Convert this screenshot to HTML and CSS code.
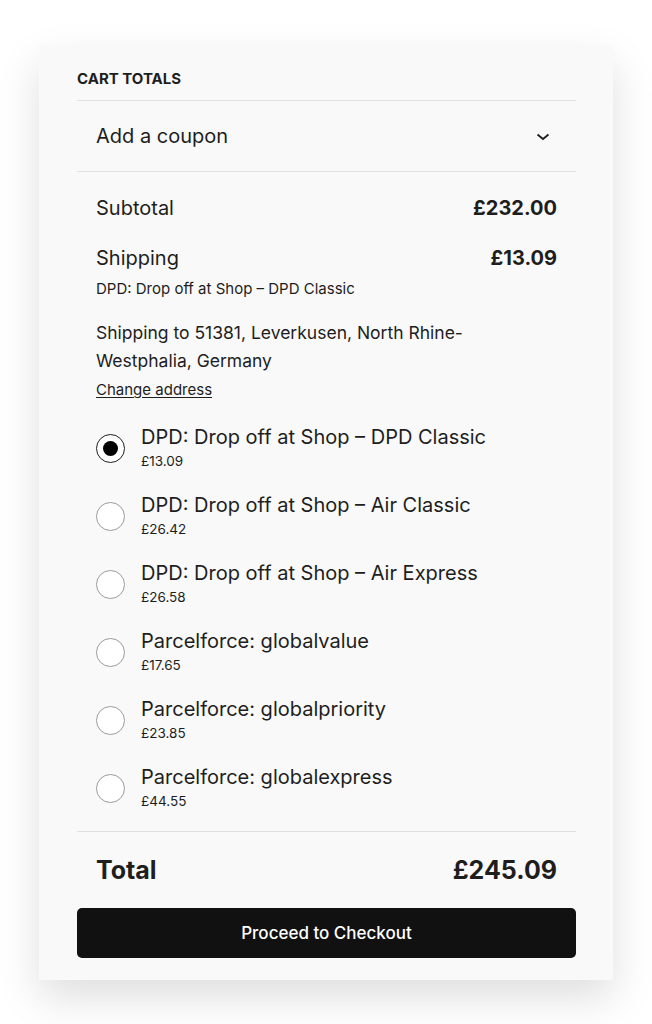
FILE: index.html
```html
<!DOCTYPE html>
<html lang="en">
<head>
<meta charset="utf-8">
<title>Cart totals</title>
<link rel="stylesheet" href="styles.css">
</head>
<body>
<div class="card">
  <h2 class="title">Cart totals</h2>
  <div class="coupon">
    <span>Add a coupon</span>
    <svg class="chev" width="14" height="8" viewBox="0 0 14 8"><path d="M1.5 1.5 L7 6 L12.5 1.5" fill="none" stroke="#1e1e1e" stroke-width="1.8"/></svg>
  </div>
  <div class="totals">
    <div class="row subtotal"><span>Subtotal</span><span class="amt">£232.00</span></div>
    <div class="row shipping"><span>Shipping</span><span class="amt">£13.09</span></div>
    <div class="method">DPD: Drop off at Shop – DPD Classic</div>
    <p class="dest">Shipping to 51381, Leverkusen, North Rhine-Westphalia, Germany<br><a href="#" class="change">Change address</a></p>
    <ul class="options">
      <li class="opt"><span class="radio checked"></span><div><div class="lbl">DPD: Drop off at Shop – DPD Classic</div><div class="price">£13.09</div></div></li>
      <li class="opt"><span class="radio"></span><div><div class="lbl">DPD: Drop off at Shop – Air Classic</div><div class="price">£26.42</div></div></li>
      <li class="opt"><span class="radio"></span><div><div class="lbl">DPD: Drop off at Shop – Air Express</div><div class="price">£26.58</div></div></li>
      <li class="opt"><span class="radio"></span><div><div class="lbl">Parcelforce: globalvalue</div><div class="price">£17.65</div></div></li>
      <li class="opt"><span class="radio"></span><div><div class="lbl">Parcelforce: globalpriority</div><div class="price">£23.85</div></div></li>
      <li class="opt"><span class="radio"></span><div><div class="lbl">Parcelforce: globalexpress</div><div class="price">£44.55</div></div></li>
    </ul>
  </div>
  <div class="row total"><span>Total</span><span>£245.09</span></div>
  <button class="checkout">Proceed to Checkout</button>
</div>
</body>
</html>
```
FILE: styles.css
```css
* { box-sizing: border-box; }
html, body { margin: 0; padding: 0; background: #fff; }
body {
  font-family: Inter, "Noto Sans", sans-serif;
  color: #1e1e1e;
  padding-top: 45px;
  padding-bottom: 45px;
}
.card {
  width: 574px;
  margin: 0 auto;
  background: #f9f9f9;
  padding: 24px 37px 22px 38px;
  box-shadow: 0 18px 40px rgba(0,0,0,0.13);
}
.title {
  margin: 0;
  font-size: 15px;
  line-height: 20px;
  font-weight: 700;
  text-transform: uppercase;
  letter-spacing: 0;
  padding-bottom: 11px;
  border-bottom: 1px solid #e0e0e0;
}
.coupon {
  height: 71px;
  display: flex;
  align-items: center;
  justify-content: space-between;
  padding: 0 26px 0 19px;
  font-size: 20px;
  border-bottom: 1px solid #e0e0e0;
}
.chev { display: block; margin-top: 2px; }
.totals {
  padding: 0 19px 18px 19px;
  border-bottom: 1px solid #e0e0e0;
}
.row {
  display: flex;
  justify-content: space-between;
  font-size: 20px;
  line-height: 24px;
}
.amt { font-weight: 700; }
.subtotal { padding-top: 24px; }
.shipping { margin-top: 26px; }
.method {
  margin-top: 9px;
  font-size: 15px;
  line-height: 20px;
}
.dest {
  margin: 20px 0 0;
  font-size: 17.5px;
  line-height: 28px;
  padding-right: 60px;
}
.change {
  color: #1e1e1e;
  font-size: 15px;
  text-decoration: underline;
  text-underline-offset: 2px;
}
.options {
  list-style: none;
  margin: 21px 0 0;
  padding: 0;
  display: flex;
  flex-direction: column;
  gap: 20px;
}
.opt {
  display: flex;
  align-items: center;
  gap: 16px;
}
.radio {
  width: 29px;
  height: 29px;
  flex: none;
  border-radius: 50%;
  background: #fff;
  border: 1px solid #9a9a9a;
  display: flex;
  align-items: center;
  justify-content: center;
  margin-top: -2px;
}
.radio.checked { border: 1.5px solid #1e1e1e; }
.radio.checked::after {
  content: "";
  width: 15px;
  height: 15px;
  border-radius: 50%;
  background: #000;
}
.lbl { font-size: 20px; line-height: 24px; }
.price { font-size: 13.5px; line-height: 24px; }
.total {
  padding: 22px 19px 0;
  font-size: 25px;
  line-height: 32px;
  font-weight: 700;
}
.checkout {
  display: block;
  width: 100%;
  height: 50px;
  margin-top: 22px;
  border: none;
  border-radius: 5px;
  background: #111;
  color: #fff;
  font-family: inherit;
  font-size: 17px;
  font-weight: 500;
}
```
